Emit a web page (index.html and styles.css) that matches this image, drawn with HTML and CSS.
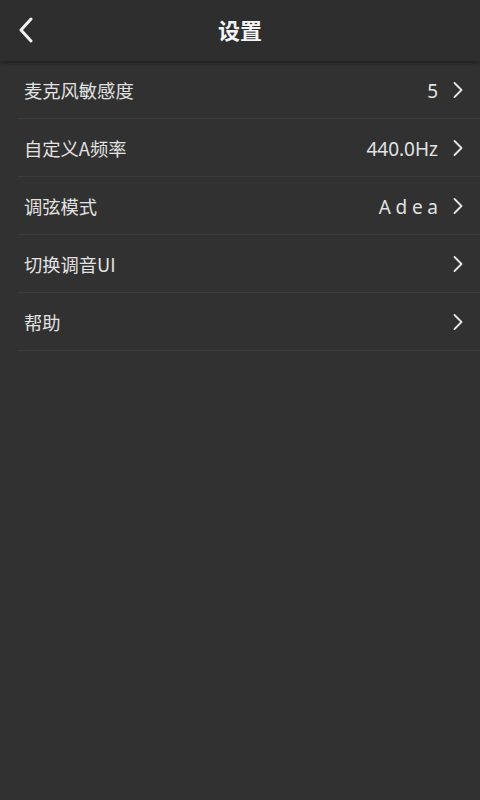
FILE: index.html
```html
<!DOCTYPE html>
<html lang="zh-CN">
<head>
<meta charset="utf-8">
<title>设置</title>
<link rel="stylesheet" href="styles.css">
</head>
<body>
<div class="app">
  <header class="topbar">
    <button class="back" aria-label="返回">
      <svg width="16" height="26" viewBox="0 0 16 26"><path d="M13 2 L3 13 L13 24" fill="none" stroke="#f2f2f2" stroke-width="3" stroke-linecap="round" stroke-linejoin="round"/></svg>
    </button>
    <h1 class="title">设置</h1>
  </header>
  <ul class="list">
    <li class="row"><span class="label">麦克风敏感度</span><span class="value">5</span><svg class="chev" width="12" height="18" viewBox="0 0 12 18"><path d="M2.5 2 L9.5 9 L2.5 16" fill="none" stroke="#e6e6e6" stroke-width="1.8" stroke-linecap="round" stroke-linejoin="round"/></svg></li>
    <li class="row"><span class="label">自定义A频率</span><span class="value">440.0Hz</span><svg class="chev" width="12" height="18" viewBox="0 0 12 18"><path d="M2.5 2 L9.5 9 L2.5 16" fill="none" stroke="#e6e6e6" stroke-width="1.8" stroke-linecap="round" stroke-linejoin="round"/></svg></li>
    <li class="row"><span class="label">调弦模式</span><span class="value spaced">Adea</span><svg class="chev" width="12" height="18" viewBox="0 0 12 18"><path d="M2.5 2 L9.5 9 L2.5 16" fill="none" stroke="#e6e6e6" stroke-width="1.8" stroke-linecap="round" stroke-linejoin="round"/></svg></li>
    <li class="row"><span class="label">切换调音UI</span><span class="value"></span><svg class="chev" width="12" height="18" viewBox="0 0 12 18"><path d="M2.5 2 L9.5 9 L2.5 16" fill="none" stroke="#e6e6e6" stroke-width="1.8" stroke-linecap="round" stroke-linejoin="round"/></svg></li>
    <li class="row"><span class="label">帮助</span><span class="value"></span><svg class="chev" width="12" height="18" viewBox="0 0 12 18"><path d="M2.5 2 L9.5 9 L2.5 16" fill="none" stroke="#e6e6e6" stroke-width="1.8" stroke-linecap="round" stroke-linejoin="round"/></svg></li>
  </ul>
</div>
</body>
</html>
```
FILE: styles.css
```css
* { box-sizing: border-box; }
html, body {
  margin: 0;
  padding: 0;
  background: #313131;
  font-family: "Noto Sans CJK SC", "Noto Sans", sans-serif;
  color: #e4e4e4;
}
.app {
  width: 480px;
  min-height: 800px;
  background: #313131;
}
.topbar {
  position: relative;
  height: 61px;
  background: #2e2e2e;
  display: flex;
  align-items: center;
  justify-content: center;
  box-shadow: 0 2px 4px rgba(0,0,0,0.35);
  z-index: 1;
}
.back {
  position: absolute;
  left: 14px;
  top: 16px;
  width: 24px;
  height: 28px;
  padding: 0;
  border: 0;
  background: none;
  display: flex;
  align-items: center;
  justify-content: center;
}
.title {
  margin: 0;
  font-size: 22px;
  font-weight: 700;
  color: #f4f4f4;
  line-height: 1;
  padding-bottom: 4px;
}
.list {
  list-style: none;
  margin: 0;
  padding: 0 0 0 18px;
}
.row {
  height: 58px;
  display: flex;
  align-items: center;
  padding: 0 16px 0 6px;
  border-bottom: 1px solid #3b3b3b;
}
.label {
  flex: 1;
  font-size: 18.3px;
  color: #e2e2e2;
}
.value {
  font-family: "Noto Sans", "Noto Sans CJK SC", sans-serif;
  font-size: 19px;
  color: #e2e2e2;
  margin-right: 14px;
  padding-top: 3px;
}
.value.spaced {
  letter-spacing: 4.7px;
  margin-right: 9.3px;
}
.chev {
  display: block;
}
```
